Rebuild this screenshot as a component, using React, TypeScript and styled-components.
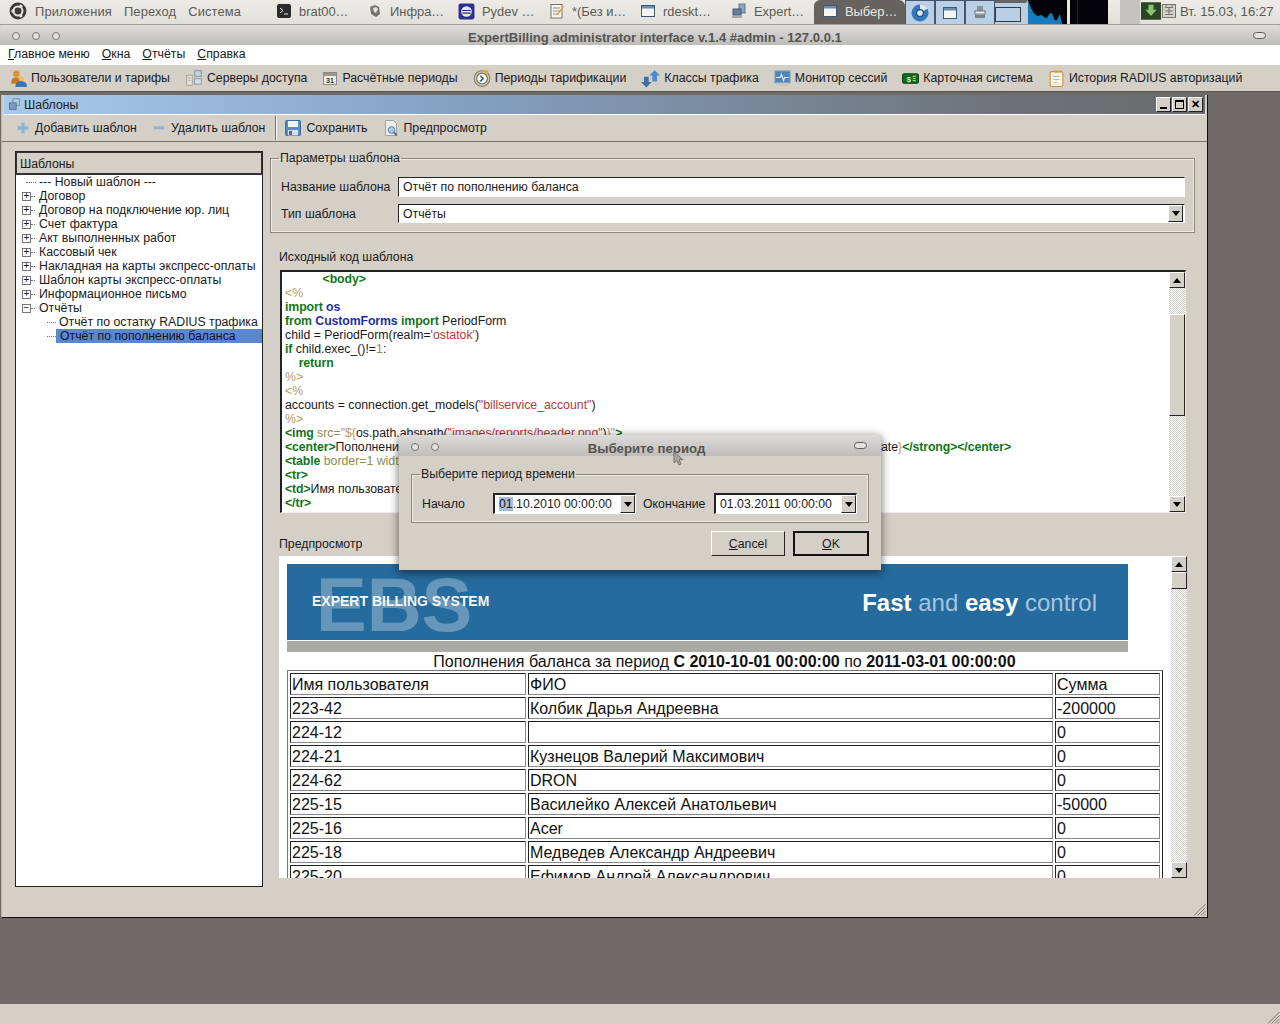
import React, { FC, ReactNode } from "react";
import styled, { createGlobalStyle } from "styled-components";

type Tok = [string, string?];

const codeLines: Tok[][] = [
  [["           "], ["<body>", "tag"]],
  [["<%", "tpl"]],
  [["import", "tag"], [" "], ["os", "kw"]],
  [["from", "tag"], [" "], ["CustomForms", "kw"], [" "], ["import", "tag"], [" PeriodForm"]],
  [["child = PeriodForm(realm="], ["'ostatok'", "str"], [")"]],
  [["if", "tag"], [" child.exec_()!="], ["1", "attr"], [":"]],
  [["    "], ["return", "tag"]],
  [["%>", "tpl"]],
  [["<%", "tpl"]],
  [["accounts = connection.get_models("], ['"billservice_account"', "str"], [")"]],
  [["%>", "tpl"]],
  [["<img", "tag"], [" src=", "attr"], ['"${', "tpl"], ["os.path.abspath("], ['"images/reports/header.png"', "str"], [")"], ['}"', "tpl"], [">", "tag"]],
  [["<center>", "tag"], ["Пополнения баланса за период "], ["<strong>", "tag"], ["С "], ["${", "tpl"], ["child.start_date.isoformat( sep=' ' )"], ["}", "tpl"], [" по "], ["${", "tpl"], ["child.end_date"], ["}", "tpl"], ["</strong></center>", "tag"]],
  [["<table", "tag"], [" border=1 width=", "attr"], ['"100%"', "str"], [">", "tag"]],
  [["<tr>", "tag"]],
  [["<td>", "tag"], ["Имя пользователя"], ["</td>", "tag"]],
  [["</tr>", "tag"]],
];

const rows = [
  ["223-42", "Колбик Дарья Андреевна", "-200000"],
  ["224-12", "", "0"],
  ["224-21", "Кузнецов Валерий Максимович", "0"],
  ["224-62", "DRON", "0"],
  ["225-15", "Василейко Алексей Анатольевич", "-50000"],
  ["225-16", "Acer", "0"],
  ["225-18", "Медведев Александр Андреевич", "0"],
  ["225-20", "Ефимов Андрей Александрович", "0"],
];

const treeItems = [
  "Договор",
  "Договор на подключение юр. лиц",
  "Счет фактура",
  "Акт выполненных работ",
  "Кассовый чек",
  "Накладная на карты экспресс-оплаты",
  "Шаблон карты экспресс-оплаты",
  "Информационное письмо",
];

const Ico: FC<{ s?: number; children: ReactNode }> = ({ s = 16, children }) => (
  <svg width={s} height={s} viewBox="0 0 16 16" style={{ flexShrink: 0 }}>
    {children}
  </svg>
);

const UsersIcon = () => (
  <Ico s={17}>
    <circle cx="6" cy="3.500" r="3" fill="#d9912f" />
    <path d="M1 13c0-5 2-6 5-6s5 1 5 6z" fill="#c47a26" />
    <circle cx="10.500" cy="8" r="2.400" fill="#edbb62" />
    <path d="M5 16c0-4 2-5.500 5.500-5.500S16 12 16 16z" fill="#3f74b5" />
  </Ico>
);
const ServerIcon = () => (
  <Ico s={18}>
    <rect x="1.500" y="5.500" width="5" height="9" fill="#e6e4de" stroke="#a9a7a0" />
    <rect x="8.500" y="1.500" width="6" height="5" fill="#c9d3de" stroke="#8f9aa6" />
    <rect x="8.500" y="8.500" width="6" height="5" fill="#d8dde2" stroke="#9aa3ac" />
    <path d="M3 8h2M3 10h2" stroke="#9a9a94" />
  </Ico>
);
const CalendarIcon = () => (
  <Ico>
    <rect x="1.500" y="2.500" width="13" height="12" fill="#efeeea" stroke="#8d8a83" />
    <rect x="2" y="3" width="12" height="3" fill="#9a9790" />
    <text x="8" y="12.500" fontSize="7" fontWeight="700" textAnchor="middle" fontFamily="Liberation Sans" fill="#333">31</text>
  </Ico>
);
const ClockIcon = () => (
  <Ico s={18}>
    <circle cx="8" cy="8.500" r="7" fill="#d8cfa3" stroke="#84806f" />
    <circle cx="8" cy="8.500" r="4.800" fill="#f8f7f0" stroke="#6f6d60" />
    <path d="M6.500 6 9 8.500 6.500 11" fill="none" stroke="#33558a" strokeWidth="1.300" />
    <circle cx="12" cy="2.500" r="1.800" fill="#e3ad2f" />
  </Ico>
);
const ArrowsIcon = () => (
  <Ico s={19}>
    <path d="M11.500 1 16 5.500h-2.500v5h-4v-5H7z" fill="#4a8ad0" />
    <path d="M4.500 15.500 0 11h2.500V6.500h4V11H9z" fill="#3f6fa8" />
  </Ico>
);
const MonitorIcon = () => (
  <Ico s={17}>
    <rect x="1" y="1" width="14" height="11" fill="#4f86bd" stroke="#6d94b8" />
    <path d="M2 7h4l1-3 2 6 1-3h4" fill="none" stroke="#e8f1fa" />
    <rect x="2" y="12" width="12" height="3" fill="#c9c7c0" />
  </Ico>
);
const CardIcon = () => (
  <Ico s={17}>
    <rect x="0.500" y="3.500" width="15" height="9" rx="2" fill="#0f6b1e" stroke="#0a4613" />
    <text x="6.500" y="11" fontSize="7" fontWeight="700" textAnchor="middle" fontFamily="Liberation Sans" fill="#d6f0c8">$</text>
    <path d="M10 6h3M10 8h3M10 10h3" stroke="#9fd08c" />
  </Ico>
);
const NoteIcon = () => (
  <Ico s={17}>
    <rect x="2" y="1.500" width="12" height="14" rx="1.500" fill="#fbf3dd" stroke="#c98f3a" />
    <path d="M5 6h6M5 9h6M5 12h4" stroke="#a9c0d6" />
    <rect x="6" y="0.500" width="6" height="2" fill="#d99d45" />
  </Ico>
);
const PlusIcon = () => (
  <Ico s={14}>
    <path d="M6 2h4v4h4v4h-4v4H6v-4H2V6h4z" fill="#8fb2d6" stroke="#a9c4df" strokeWidth="0.500" />
  </Ico>
);
const MinusIcon = () => (
  <Ico s={14}>
    <rect x="2" y="6" width="12" height="3.500" fill="#8fb2d6" />
  </Ico>
);
const SaveIcon = () => (
  <Ico>
    <rect x="0.500" y="0.500" width="15" height="15" rx="1" fill="#5c8cc0" stroke="#3b6a9e" />
    <rect x="3" y="1" width="10" height="6" fill="#eef3f8" />
    <rect x="3" y="10" width="10" height="5.500" fill="#d7dde3" />
    <rect x="4" y="11" width="3" height="4" fill="#4a6f96" />
  </Ico>
);
const PreviewIcon = () => (
  <Ico>
    <path d="M2.500.5h8l3 3v12h-11z" fill="#ecece9" stroke="#a3a39e" />
    <circle cx="8.500" cy="10" r="3.300" fill="#a9c9e6" stroke="#5d84a8" />
    <path d="m11 12.500 3 3" stroke="#5d6f80" strokeWidth="1.800" />
  </Ico>
);
const DocsIcon = () => (
  <Ico s={13}>
    <rect x="6" y="1" width="8" height="8" fill="#b9c9dc" stroke="#6e8099" />
    <rect x="2" y="6" width="8" height="8" fill="#7f9cc0" stroke="#50698a" />
  </Ico>
);
const UbuntuIcon = () => (
  <Ico s={18}>
    <circle cx="8" cy="8" r="7.500" fill="#3a3a38" />
    <circle cx="8" cy="8" r="4" fill="none" stroke="#e4e2dc" strokeWidth="1.800" />
    <circle cx="3.500" cy="8" r="1.500" fill="#e4e2dc" />
    <circle cx="10.500" cy="3.800" r="1.500" fill="#e4e2dc" />
    <circle cx="10.500" cy="12.200" r="1.500" fill="#e4e2dc" />
  </Ico>
);
const TermIcon = () => (
  <Ico>
    <rect x="1" y="1" width="14" height="14" rx="2" fill="#2b2b2b" />
    <path d="m4 5 3 2.500L4 10M8 11h4" fill="none" stroke="#eee" />
  </Ico>
);
const BookIcon = () => (
  <Ico>
    <path d="M3 4 8 2l4 2 1 7-4 3-5-3z" fill="#77736b" />
    <path d="m6 5 3-1 2 2-2 4-2-1z" fill="#e4e2dc" />
  </Ico>
);
const EclipseIcon = () => (
  <Ico s={17}>
    <rect x="0.500" y="0.500" width="15" height="15" rx="2" fill="#2f2f8f" />
    <circle cx="8" cy="8" r="5" fill="#e7e7f5" />
    <path d="M4 7h8M4 9.500h8" stroke="#2f2f8f" />
  </Ico>
);
const PadIcon = () => (
  <Ico>
    <rect x="2" y="1.500" width="11" height="13.500" fill="#f6f5f0" stroke="#77736b" />
    <path d="M4 5h7M4 8h7M4 11h5" stroke="#8a8a8a" />
    <path d="m8 11 6-8 1 1-6 8z" fill="#d9a23a" />
  </Ico>
);
const WinIcon = () => (
  <Ico>
    <rect x="1.500" y="2.500" width="13" height="11" fill="#f4f4f2" stroke="#3e5878" />
    <rect x="2" y="3" width="12" height="2.500" fill="#6b8cb3" />
  </Ico>
);
const NetIcon = () => (
  <Ico>
    <rect x="8" y="1" width="6" height="9" fill="#8da4c0" stroke="#5f7690" />
    <rect x="2" y="6" width="8" height="6" fill="#65809f" stroke="#465a72" />
    <rect x="1" y="13" width="10" height="2" fill="#a9a7a0" />
  </Ico>
);
const ChromeIcon = () => (
  <Ico s={18}>
    <circle cx="8" cy="8" r="7.500" fill="#3577bd" />
    <path d="M8 .5a7.500 7.500 0 0 1 6.500 3.700L8 8z" fill="#e8e8ea" />
    <circle cx="8" cy="8" r="3" fill="#dfe8f2" stroke="#16457c" />
  </Ico>
);
const PrinterIcon = () => (
  <Ico>
    <rect x="5" y="1" width="6" height="5" fill="#8a9199" />
    <rect x="3" y="6" width="10" height="3" fill="#f2f2f2" stroke="#66727f" />
    <rect x="3" y="10" width="10" height="3" fill="#76828f" />
  </Ico>
);
const ShieldIcon = () => (
  <Ico s={20}>
    <rect x="0" y="1" width="16" height="14" fill="#2c4526" />
    <path d="M6 3h4v4h2.500L8 12 3.500 7H6z" fill="#8cc474" />
  </Ico>
);
const KbdIcon = () => (
  <Ico>
    <rect x="1.500" y="1.500" width="13" height="13" fill="#d4d2cc" stroke="#77736b" />
    <path d="M4 4.500h8M4 8h8M4 11.500h8M8 4v8M5 2v2M11 2v2" stroke="#77736b" />
  </Ico>
);
const Spark = () => (
  <svg width="39" height="24" viewBox="0 0 39 24" style={{ display: "block" }}>
    <path d="M0 0c2 6 5 13 8 15s3 0 5 0 3 3 5 3 3-5 5-5 2 5 4 7 3-3 5-6l2 10H0z" fill="#0f7dbf" />
  </svg>
);
const Grip = () => (
  <svg width="13" height="13" viewBox="0 0 13 13" style={{ display: "block" }}>
    <path d="M12.500 1 1 12.500M12.500 4.500 4.500 12.500M12.500 8 8 12.500M12.500 11l-1.500 1.500" stroke="#7f7c75" fill="none" />
  </svg>
);
const Cursor = () => (
  <svg width="11" height="16" viewBox="0 0 11 16" style={{ display: "block" }}>
    <path d="M1 1v11l3-2.500 2 4.500 2-1-2-4.300h4z" fill="#a8a6a0" stroke="#77756f" />
  </svg>
);
const Arrow: FC<{ dir: "up" | "down" }> = ({ dir }) => (
  <svg width={8} height={5} viewBox="0 0 8 5">
    <path d={dir === "up" ? "M4 0 8 5H0z" : "M0 0h8L4 5z"} fill="#000" />
  </svg>
);

const tasks: [ReactNode, string][] = [
  [<TermIcon />, "brat00…"],
  [<BookIcon />, "Инфра…"],
  [<EclipseIcon />, "Pydev …"],
  [<PadIcon />, "*(Без и…"],
  [<WinIcon />, "rdeskt…"],
  [<NetIcon />, "Expert…"],
];

const mainTools: [ReactNode, string][] = [
  [<UsersIcon />, "Пользователи и тарифы"],
  [<ServerIcon />, "Серверы доступа"],
  [<CalendarIcon />, "Расчётные периоды"],
  [<ClockIcon />, "Периоды тарификации"],
  [<ArrowsIcon />, "Классы трафика"],
  [<MonitorIcon />, "Монитор сессий"],
  [<CardIcon />, "Карточная система"],
  [<NoteIcon />, "История RADIUS авторизаций"],
];

const VScroll: FC<{ top: number; size: number }> = ({ top, size }) => (
  <ScrollTrack>
    <ScrollBtn>
      <Arrow dir="up" />
    </ScrollBtn>
    <ScrollGutter>
      <ScrollThumb $top={top} $size={size} />
    </ScrollGutter>
    <ScrollBtn>
      <Arrow dir="down" />
    </ScrollBtn>
  </ScrollTrack>
);

const App = () => {
  return (
    <Desktop>
      <GlobalStyle />
      <TopPanel>
        <PanelMenu>
          <UbuntuIcon />
          <PanelMenuItem>Приложения</PanelMenuItem>
          <PanelMenuItem>Переход</PanelMenuItem>
          <PanelMenuItem>Система</PanelMenuItem>
        </PanelMenu>
        <TaskList>
          {tasks.map(([icon, label]) => (
            <TaskButton key={label}>
              {icon}
              <span>{label}</span>
            </TaskButton>
          ))}
          <TaskButton $active>
            <WinIcon />
            <span>Выбер…</span>
          </TaskButton>
        </TaskList>
        <Pager>
          <PagerCell><ChromeIcon /></PagerCell>
          <PagerCell><WinIcon /></PagerCell>
          <PagerCell><PrinterIcon /></PagerCell>
          <WorkspaceCell><WorkspaceWin /></WorkspaceCell>
        </Pager>
        <Graph><Spark /></Graph>
        <BlackGraph />
        <TraySlot />
        <Tray>
          <ShieldIcon />
          <KbdIcon />
          <Clock>Вт. 15.03, 16:27</Clock>
        </Tray>
      </TopPanel>

      <WinTitle>
        <WinDots>
          <WinDot />
          <WinDot />
          <WinDot />
        </WinDots>
        <WinName>ExpertBilling administrator interface v.1.4 #admin - 127.0.0.1</WinName>
        <WinPill />
      </WinTitle>

      <MenuBar>
        <span><u>Г</u>лавное меню</span>
        <span><u>О</u>кна</span>
        <span><u>О</u>тчёты</span>
        <span><u>С</u>правка</span>
      </MenuBar>

      <MainToolbar>
        {mainTools.map(([icon, label]) => (
          <MainTool key={label}>
            {icon}
            <span>{label}</span>
          </MainTool>
        ))}
      </MainToolbar>

      <MdiArea>
        <SubWindow>
          <SubTitle>
            <DocsIcon />
            <SubName>Шаблоны</SubName>
            <SubButtons>
              <SubButton><MinGlyph /></SubButton>
              <SubButton><MaxGlyph /></SubButton>
              <SubButton>✕</SubButton>
            </SubButtons>
          </SubTitle>

          <SubToolbar>
            <SubTool><PlusIcon />Добавить шаблон</SubTool>
            <SubTool><MinusIcon />Удалить шаблон</SubTool>
            <ToolSep />
            <SubTool><SaveIcon />Сохранить</SubTool>
            <SubTool><PreviewIcon />Предпросмотр</SubTool>
          </SubToolbar>

          <SubBody>
            <TreePanel>
              <TreeHeader>Шаблоны</TreeHeader>
              <div>
                <TreeRow>
                  <TreeGutter><Stub /></TreeGutter>
                  <TreeText>--- Новый шаблон ---</TreeText>
                </TreeRow>
                {treeItems.map((t) => (
                  <TreeRow key={t}>
                    <TreeGutter><Expander>+</Expander><Stub $short /></TreeGutter>
                    <TreeText>{t}</TreeText>
                  </TreeRow>
                ))}
                <TreeRow>
                  <TreeGutter><Expander>−</Expander><Stub $short /></TreeGutter>
                  <TreeText>Отчёты</TreeText>
                </TreeRow>
                <TreeRow>
                  <ChildGutter><Stub /></ChildGutter>
                  <TreeText>Отчёт по остатку RADIUS трафика</TreeText>
                </TreeRow>
                <TreeRow>
                  <ChildGutter><Stub /></ChildGutter>
                  <TreeSelected>Отчёт по пополнению баланса</TreeSelected>
                </TreeRow>
              </div>
            </TreePanel>

            <RightColumn>
              <ParamsBox>
                <GroupLegend>Параметры шаблона</GroupLegend>
                <ParamRow>
                  <ParamLabel>Название шаблона</ParamLabel>
                  <TextInput>Отчёт по пополнению баланса</TextInput>
                </ParamRow>
                <ParamRow>
                  <ParamLabel>Тип шаблона</ParamLabel>
                  <ComboWide>
                    <ComboValue>Отчёты</ComboValue>
                    <ComboArrow><Arrow dir="down" /></ComboArrow>
                  </ComboWide>
                </ParamRow>
              </ParamsBox>

              <SectionLabel>Исходный код шаблона</SectionLabel>
              <CodeFrame>
                <CodeText>
                  {codeLines.map((line, i) => (
                    <CodeLine key={i}>
                      {line.map(([text, kind], j) => (
                        <CodeTok key={j} $kind={kind}>{text}</CodeTok>
                      ))}
                    </CodeLine>
                  ))}
                </CodeText>
                <VScroll top={26} size={102} />
              </CodeFrame>

              <PreviewLabel>Предпросмотр</PreviewLabel>
              <PreviewFrame>
                <PreviewPage>
                  <Banner>
                    <BannerMark>EBS</BannerMark>
                    <BannerName>EXPERT BILLING SYSTEM</BannerName>
                    <BannerSlogan><b>Fast</b> and <b>easy</b> control</BannerSlogan>
                  </Banner>
                  <BannerStrip />
                  <ReportTitle>
                    Пополнения баланса за период <b>С 2010-10-01 00:00:00</b> по <b>2011-03-01 00:00:00</b>
                  </ReportTitle>
                  <ReportTable>
                    <colgroup>
                      <col width="236" />
                      <col width="525" />
                      <col width="105" />
                    </colgroup>
                    <tbody>
                      <tr>
                        <Cell>Имя пользователя</Cell>
                        <Cell>ФИО</Cell>
                        <Cell>Сумма</Cell>
                      </tr>
                      {rows.map((r) => (
                        <tr key={r[0]}>
                          <Cell>{r[0]}</Cell>
                          <Cell>{r[1]}</Cell>
                          <Cell>{r[2]}</Cell>
                        </tr>
                      ))}
                    </tbody>
                  </ReportTable>
                </PreviewPage>
                <VScroll top={0} size={17} />
              </PreviewFrame>
            </RightColumn>
          </SubBody>
          <SubGrip><Grip /></SubGrip>
        </SubWindow>
      </MdiArea>

      <StatusBar><Grip /></StatusBar>

      <Dialog>
        <DialogTitle>
          <DialogDots>
            <WinDot />
            <WinDot />
          </DialogDots>
          <DialogName>Выберите период</DialogName>
          <WinPill />
        </DialogTitle>
        <DialogBody>
          <PeriodBox>
            <GroupLegend>Выберите период времени</GroupLegend>
            <PeriodRow>
              <PeriodLabel>Начало</PeriodLabel>
              <DateCombo>
                <ComboValue><Picked>01</Picked>.10.2010 00:00:00</ComboValue>
                <ComboArrow><Arrow dir="down" /></ComboArrow>
              </DateCombo>
              <EndLabel>Окончание</EndLabel>
              <DateCombo>
                <ComboValue>01.03.2011 00:00:00</ComboValue>
                <ComboArrow><Arrow dir="down" /></ComboArrow>
              </DateCombo>
            </PeriodRow>
          </PeriodBox>
          <DialogButtons>
            <PushButton><u>C</u>ancel</PushButton>
            <PushButton $primary><u>O</u>K</PushButton>
          </DialogButtons>
        </DialogBody>
      </Dialog>
      <PointerMark><Cursor /></PointerMark>
    </Desktop>
  );
};

export default App;

const GlobalStyle = createGlobalStyle`
html, body {
  margin: 0;
  padding: 0;
  background: #6e6a66;
}
* {
  box-sizing: border-box;
}
`;

const Desktop = styled.div`
position: relative;
width: 1280px;
height: 1024px;
overflow: hidden;
display: flex;
flex-direction: column;
font-family: "Liberation Sans", Arial, sans-serif;
font-size: 12.3px;
color: #1a1a1a;
background: #d4d0c8;
`;

const TopPanel = styled.div`
height: 25px;
flex-shrink: 0;
display: flex;
align-items: stretch;
background: linear-gradient(#ecebe6, #e2e0da);
border-bottom: 1px solid #9f9d97;
font-size: 12.9px;
color: #5c5a55;
`;
const PanelMenu = styled.div`
width: 267px;
padding-left: 9px;
padding-bottom: 2px;
display: flex;
align-items: center;
flex-shrink: 0;
`;
const PanelMenuItem = styled.span`
margin-left: 8px;
margin-right: 4px;
letter-spacing: 0.15px;
`;
const TaskList = styled.div`
display: flex;
width: 638px;
flex-shrink: 0;
`;
const TaskButton = styled.div<{ $active?: boolean }>`
width: 91px;
margin-left: ${(p) => (p.$active ? "1px" : "0")};
padding-left: ${(p) => (p.$active ? "8px" : "9px")};
padding-bottom: 2px;
display: flex;
align-items: center;
gap: 7px;
white-space: nowrap;
overflow: hidden;
background: ${(p) => (p.$active ? "#66635f" : "transparent")};
color: ${(p) => (p.$active ? "#e9e7e2" : "#5c5a55")};
border-radius: ${(p) => (p.$active ? "6px 6px 0 0" : "0")};
`;
const Pager = styled.div`
display: flex;
width: 123px;
flex-shrink: 0;
`;
const PagerCell = styled.div`
width: 30px;
display: flex;
align-items: center;
justify-content: center;
background: #b9cfe5;
border: 1px solid #45566a;
border-width: 1px 1px 0 1px;
`;
const WorkspaceCell = styled.div`
width: 33px;
padding: 4px 4px 2px 0;
background: #b9cfe5;
border-top: 3px solid #66635f;
border-right: 2px solid #c8c8c4;
`;
const WorkspaceWin = styled.div`
height: 100%;
width: 26px;
border: 1px solid #33383f;
`;
const Graph = styled.div`
width: 39px;
flex-shrink: 0;
background: #030308;
overflow: hidden;
`;
const BlackGraph = styled.div`
width: 38px;
margin-left: 3px;
background-color: #030308;
background-image: linear-gradient(90deg, transparent 7px, #1a1a80 7px 8px, transparent 8px);
flex-shrink: 0;
`;
const TraySlot = styled.div`
width: 20px;
margin-left: 12px;
background: #c4c2bc;
flex-shrink: 0;
`;
const Tray = styled.div`
display: flex;
align-items: center;
gap: 0;
padding: 0 0 2px 1px;
flex: 1;
`;
const Clock = styled.span`
margin-left: 3px;
white-space: nowrap;
font-size: 13.2px;
`;

const WinTitle = styled.div`
height: 20px;
flex-shrink: 0;
display: flex;
align-items: center;
padding: 0 14px 0 12px;
background: linear-gradient(#dfdddb, #bdbcba);
border-top-left-radius: 4px;
border-top-right-radius: 4px;
`;
const WinDots = styled.div`
display: flex;
gap: 12px;
width: 48px;
padding-top: 1px;
`;
const DialogDots = styled(WinDots)`
padding-top: 2px;
`;
const WinDot = styled.span`
width: 8px;
height: 8px;
border-radius: 50%;
border: 1px solid #77756f;
background: #e3e2e0;
`;
const WinName = styled.div`
flex: 1;
padding: 5px 3px 0 0;
text-align: center;
font-weight: bold;
font-size: 13.1px;
color: #56544f;
white-space: nowrap;
`;
const WinPill = styled.span`
width: 13px;
height: 7px;
border-radius: 4px;
border: 1px solid #5f5d58;
background: #e3e2e0;
`;

const MenuBar = styled.div`
height: 20px;
flex-shrink: 0;
display: flex;
align-items: center;
gap: 12px;
padding: 0 0 2px 8px;
background: #fff;
`;

const MainToolbar = styled.div`
height: 27px;
flex-shrink: 0;
display: flex;
align-items: center;
gap: 15px;
padding-left: 10px;
background: #d4d0c8;
border-bottom: 1px solid #55534e;
`;
const MainTool = styled.div`
display: flex;
align-items: center;
gap: 4px;
white-space: nowrap;
`;

const MdiArea = styled.div`
flex: 1;
min-height: 0;
padding: 3px 0 0 1px;
background: #6e6a66;
`;
const SubWindow = styled.div`
position: relative;
width: 1207px;
height: 823px;
display: flex;
flex-direction: column;
background: #d4d0c8;
border-right: 1px solid #111;
border-bottom: 1px solid #111;
border-left: 1px solid #bdbab2;
`;
const SubTitle = styled.div`
height: 20px;
flex-shrink: 0;
display: flex;
align-items: center;
margin: 0 2px;
padding: 0 2px 1px 4px;
background: linear-gradient(90deg, #a9c9ec, #86a4c6 35%, #6e7176 85%, #6b6b6b);
border-bottom: 1px solid #fff;
`;
const SubName = styled.span`
margin-left: 3px;
padding-top: 2px;
flex: 1;
`;
const SubButtons = styled.div`
display: flex;
gap: 1px;
`;
const SubButton = styled.span`
width: 15px;
height: 15px;
display: flex;
align-items: center;
justify-content: center;
font-size: 11px;
font-weight: bold;
color: #000;
background: #d4d0c8;
border: 1px solid;
border-color: #fff #222 #222 #fff;
`;
const MinGlyph = styled.span`
width: 7px;
height: 2px;
margin-top: 8px;
background: #000;
`;
const MaxGlyph = styled.span`
width: 9px;
height: 9px;
border: 1px solid #000;
border-top-width: 2px;
`;

const SubToolbar = styled.div`
height: 27px;
flex-shrink: 0;
display: flex;
align-items: center;
gap: 15px;
padding-left: 14px;
border-bottom: 1px solid #77756f;
`;
const SubTool = styled.div`
display: flex;
align-items: center;
gap: 5px;
white-space: nowrap;
`;
const ToolSep = styled.span`
width: 2px;
height: 24px;
margin: 0 -7px 0 -5px;
background: #77756f;
border-right: 1px solid #fff;
`;

const SubBody = styled.div`
flex: 1;
min-height: 0;
display: flex;
gap: 7px;
padding: 9px 12px 30px 13px;
`;
const TreePanel = styled.div`
width: 248px;
flex-shrink: 0;
display: flex;
flex-direction: column;
background: #fff;
border: 1px solid #222;
`;
const TreeHeader = styled.div`
height: 23px;
display: flex;
align-items: center;
padding: 2px 0 0 3px;
background: #d4d0c8;
border: 1px solid #333;
border-width: 1px 1px 2px 1px;
`;
const TreeRow = styled.div`
height: 14px;
display: flex;
align-items: center;
white-space: nowrap;
`;
const TreeGutter = styled.span`
width: 20px;
height: 14px;
padding-left: 6px;
display: flex;
align-items: center;
flex-shrink: 0;
`;
const ChildGutter = styled(TreeGutter)`
width: 40px;
padding-left: 27px;
`;
const Expander = styled.span`
width: 9px;
height: 9px;
flex-shrink: 0;
display: flex;
align-items: center;
justify-content: center;
font-size: 10px;
line-height: 1;
color: #111;
background: #fff;
border: 1px solid #777;
`;
const Stub = styled.span<{ $short?: boolean }>`
width: ${(p) => (p.$short ? "4px" : "10px")};
margin-left: ${(p) => (p.$short ? "0" : "4px")};
border-bottom: 1px dotted #777;
`;
const TreeText = styled.span`
padding-left: 3px;
`;
const TreeSelected = styled.span`
flex: 1;
height: 14px;
line-height: 14px;
padding-left: 4px;
background: #5b87cf;
color: #10151e;
`;

const RightColumn = styled.div`
flex: 1;
min-width: 0;
display: flex;
flex-direction: column;
`;
const ParamsBox = styled.fieldset`
margin: 0;
height: 82px;
padding: 12px 9px 0 10px;
border: 1px solid #8b8880;
box-shadow: 0 0 0 1px #eeeae2 inset;
display: flex;
flex-direction: column;
gap: 7px;
`;
const GroupLegend = styled.legend`
padding: 0 1px;
margin-left: -2px;
`;
const ParamRow = styled.div`
display: flex;
align-items: center;
`;
const ParamLabel = styled.span`
width: 117px;
flex-shrink: 0;
`;
const TextInput = styled.div`
flex: 1;
height: 20px;
line-height: 18px;
padding-left: 4px;
background: #fff;
border: 1px solid;
border-color: #222 #fff #fff #222;
`;
const ComboWide = styled.div`
flex: 1;
height: 19px;
display: flex;
padding-right: 1px;
background: #fff;
border: 1px solid;
border-color: #222 #fff #fff #222;
`;
const ComboValue = styled.span`
flex: 1;
line-height: 18px;
padding-left: 4px;
white-space: nowrap;
`;
const ComboArrow = styled.span`
width: 15px;
flex-shrink: 0;
display: flex;
align-items: center;
justify-content: center;
background: #d4d0c8;
border: 1px solid;
border-color: #fff #222 #222 #fff;
`;

const SectionLabel = styled.div`
height: 14px;
line-height: 14px;
margin: 17px 0 6px 9px;
`;
const CodeFrame = styled.div`
display: flex;
height: 243px;
flex-shrink: 0;
margin: 0 9px 0 10px;
background: #fff;
border: 1px solid;
border-width: 2px 1px 1px 2px;
border-color: #222 #eee #eee #222;
`;
const CodeText = styled.div`
flex: 1;
min-width: 0;
overflow: hidden;
padding: 0 0 0 3px;
`;
const CodeLine = styled.div`
height: 14px;
line-height: 14px;
white-space: pre;
`;
const tokColor: Record<string, string> = {
  tag: "#11761a",
  kw: "#1c2fb0",
  tpl: "#b79a63",
  str: "#b23a3a",
  attr: "#8d8f4a",
};
const CodeTok = styled.span<{ $kind?: string }>`
color: ${(p) => (p.$kind ? tokColor[p.$kind] : "#1a1a1a")};
font-weight: ${(p) => (p.$kind === "tag" || p.$kind === "kw" ? "bold" : "normal")};
letter-spacing: ${(p) => (p.$kind === "tag" || p.$kind === "kw" ? "-0.1px" : "0")};
`;

const ScrollTrack = styled.div`
width: 16px;
flex-shrink: 0;
display: flex;
flex-direction: column;
`;
const ScrollBtn = styled.div`
height: 16px;
flex-shrink: 0;
display: flex;
align-items: center;
justify-content: center;
background: #d4d0c8;
border: 1px solid;
border-color: #fff #222 #222 #fff;
`;
const ScrollGutter = styled.div`
flex: 1;
min-height: 0;
background-color: #fff;
background-image: conic-gradient(#d4d0c8 25%, transparent 0 50%, #d4d0c8 0 75%, transparent 0);
background-size: 2px 2px;
`;
const ScrollThumb = styled.div<{ $top: number; $size: number }>`
margin-top: ${(p) => p.$top}px;
height: ${(p) => p.$size}px;
background: #d4d0c8;
border: 1px solid;
border-color: #fff #222 #222 #fff;
`;

const PreviewLabel = styled.div`
height: 14px;
line-height: 14px;
margin: 24px 0 5px 9px;
`;
const PreviewFrame = styled.div`
display: flex;
height: 322px;
flex-shrink: 0;
margin: 0 8px 0 9px;
background: #fff;
overflow: hidden;
`;
const PreviewPage = styled.div`
flex: 1;
min-width: 0;
overflow: hidden;
padding: 8px 0 0 8px;
font-size: 16px;
color: #111;
`;
const Banner = styled.div`
position: relative;
width: 841px;
height: 76px;
padding: 29px 31px 0 25px;
display: flex;
justify-content: space-between;
background: #256b9e;
overflow: hidden;
`;
const BannerMark = styled.div`
position: absolute;
left: 29px;
top: -3px;
font-size: 76px;
font-weight: bold;
line-height: 88px;
color: rgba(255, 255, 255, 0.3);
`;
const BannerName = styled.div`
position: relative;
font-size: 14px;
font-weight: bold;
line-height: 16px;
color: #f2f6fa;
`;
const BannerSlogan = styled.div`
font-size: 24px;
line-height: 20px;
color: #a5c6df;
b { color: #fff; }
`;
const BannerStrip = styled.div`
width: 841px;
height: 12px;
background: #aaa9a6;
border-top: 1px solid #fff;
`;
const ReportTitle = styled.div`
width: 875px;
height: 18px;
line-height: 20px;
text-align: center;
white-space: nowrap;
`;
const ReportTable = styled.table`
width: 875px;
table-layout: fixed;
border-collapse: separate;
border-spacing: 2px;
border: 1px solid;
border-color: #777 #222 #222 #777;
`;
const Cell = styled.td`
height: 22px;
padding: 2px 1px 0;
line-height: 18px;
border: 1px solid;
border-color: #222 #888 #888 #222;
white-space: nowrap;
`;

const SubGrip = styled.div`
position: absolute;
right: 1px;
bottom: 1px;
`;
const StatusBar = styled.div`
height: 20px;
flex-shrink: 0;
display: flex;
align-items: flex-end;
justify-content: flex-end;
background: #d4d0c8;
`;

const Dialog = styled.div`
position: absolute;
left: 399px;
top: 435px;
width: 482px;
height: 135px;
display: flex;
flex-direction: column;
background: #d4d0c8;
border-radius: 4px 4px 0 0;
box-shadow: 0 2px 8px 1px rgba(0, 0, 0, 0.5);
`;
const DialogTitle = styled.div`
height: 21px;
flex-shrink: 0;
display: flex;
align-items: center;
padding: 0 14px 0 12px;
border-radius: 4px 4px 0 0;
background: linear-gradient(#dddbd9, #bfbdbb);
`;
const DialogName = styled.div`
flex: 1;
padding: 5px 20px 0 0;
text-align: center;
font-size: 13.2px;
font-weight: bold;
color: #56544f;
`;
const DialogBody = styled.div`
flex: 1;
padding: 11px 12px 0 12px;
`;
const PeriodBox = styled.fieldset`
margin: 0;
height: 56px;
padding: 12px 10px 0 10px;
border: 1px solid #8b8880;
box-shadow: 0 0 0 1px #eeeae2 inset;
`;
const PeriodRow = styled.div`
display: flex;
align-items: center;
`;
const PeriodLabel = styled.span`
width: 71px;
`;
const EndLabel = styled.span`
width: 78px;
padding-left: 7px;
`;
const DateCombo = styled.div`
width: 143px;
height: 21px;
display: flex;
background: #fff;
border: 1px solid;
border-width: 2px 1px 1px 2px;
border-color: #222 #fff #fff #222;
`;
const Picked = styled.span`
background: #a8bcd9;
`;
const DialogButtons = styled.div`
display: flex;
justify-content: flex-end;
gap: 8px;
margin-top: 8px;
`;
const PushButton = styled.div<{ $primary?: boolean }>`
width: ${(p) => (p.$primary ? "76px" : "74px")};
height: 25px;
display: flex;
align-items: center;
justify-content: center;
background: #d4d0c8;
border: 1px solid;
border-color: ${(p) => (p.$primary ? "#111" : "#fff #222 #222 #fff")};
border-width: ${(p) => (p.$primary ? "2px" : "1px")};
`;
const PointerMark = styled.div`
position: absolute;
left: 673px;
top: 451px;
`;
